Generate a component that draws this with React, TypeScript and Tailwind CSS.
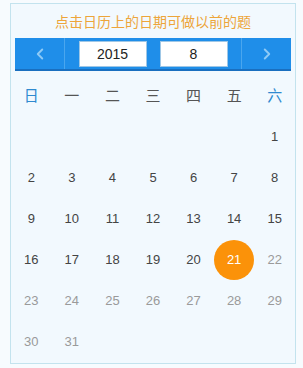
import { ChevronLeft, ChevronRight } from 'lucide-react';

const WEEK = ['日', '一', '二', '三', '四', '五', '六'];
const TODAY = 21;

/* Aug 2015 starts on Saturday */
const cells: (number | null)[] = [
  ...Array.from({ length: 6 }, () => null),
  ...Array.from({ length: 31 }, (_, i) => i + 1),
];

export default function App() {
  return (
    <div className="w-[303px] h-[368px] bg-[#f7fbfe] pt-[3px] pl-[10px]">
      <div
        className="w-[286px] h-[361px] border border-[#c3e3ee] bg-[#f2f9fe] px-[4px]"
        style={{ fontFamily: '"Liberation Sans", "Noto Sans CJK SC", sans-serif' }}
      >
        {/* Title */}
        <div
          className="h-[34px] flex items-center justify-center text-[14px] text-[#eda53a]"
          style={{ fontFamily: '"Noto Sans CJK SC", sans-serif' }}
        >
          点击日历上的日期可做以前的题
        </div>

        {/* Year / month bar */}
        <div className="h-[33px] flex bg-[#1f8ee9] border-b-2 border-[#1a6fbf]">
          <div className="w-[50px] flex items-center justify-center border-r border-[#4aa6ee]">
            <ChevronLeft className="w-[18px] h-[18px] text-[#8fcaf6]" strokeWidth={2.5} />
          </div>
          <div className="flex-1 flex items-center justify-center gap-[13px] pt-[1px]">
            <div className="w-[68px] h-[26px] bg-white border border-[#9fc7e6] flex items-center justify-center text-[14px] text-[#222]">
              2015
            </div>
            <div className="w-[68px] h-[26px] bg-white border border-[#9fc7e6] flex items-center justify-center text-[14px] text-[#222]">
              8
            </div>
          </div>
          <div className="w-[50px] flex items-center justify-center border-l border-[#4aa6ee]">
            <ChevronRight className="w-[18px] h-[18px] text-[#8fcaf6]" strokeWidth={2.5} />
          </div>
        </div>

        {/* Calendar grid */}
        <div className="-mx-[4px] mt-[4px] grid grid-cols-7">
          {WEEK.map((w, i) => (
            <div
              key={w}
              className={`h-[41px] flex items-center justify-center text-[15px] ${
                i === 0 || i === 6 ? 'text-[#2f8ad0]' : 'text-[#555]'
              }`}
              style={{ fontFamily: '"Noto Sans CJK SC", sans-serif' }}
            >
              {w}
            </div>
          ))}
          {cells.map((d, i) => (
            <div key={i} className="h-[41px] flex items-center justify-center text-[13px]">
              {d === null ? null : d === TODAY ? (
                <span className="w-[40px] h-[40px] rounded-full bg-[#fb9209] text-white flex items-center justify-center">
                  {d}
                </span>
              ) : (
                <span className={d > TODAY ? 'text-[#9a9a9a]' : 'text-[#444]'}>{d}</span>
              )}
            </div>
          ))}
        </div>
      </div>
    </div>
  );
}
